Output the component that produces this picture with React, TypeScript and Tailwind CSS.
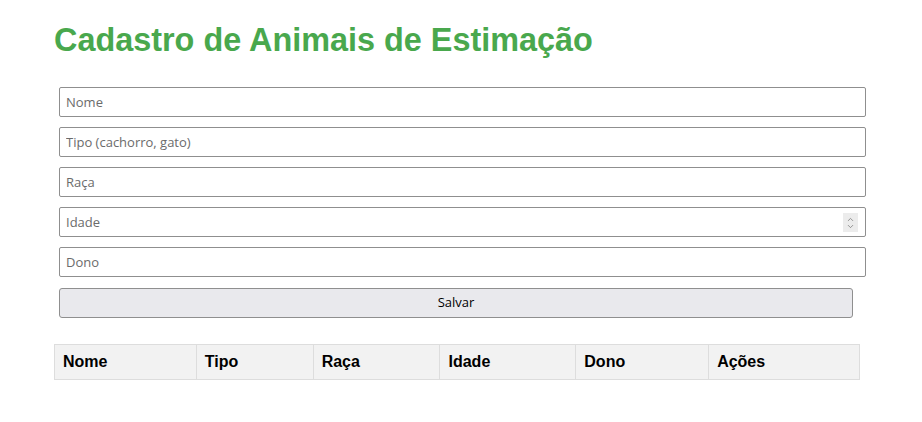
import { ChevronUp, ChevronDown } from "lucide-react";

const fields = ["Nome", "Tipo (cachorro, gato)", "Raça"];
const columns = [
  { label: "Nome", w: "w-[142px]" },
  { label: "Tipo", w: "w-[117px]" },
  { label: "Raça", w: "w-[127px]" },
  { label: "Idade", w: "w-[136px]" },
  { label: "Dono", w: "w-[133px]" },
  { label: "Ações", w: "w-[151px]" },
];

function Field({ placeholder }: { placeholder: string }) {
  return (
    <input
      placeholder={placeholder}
      className="h-[30px] w-full rounded-[2px] border border-[#8f8f8f] bg-white px-[6px] text-[13px] text-[#333] placeholder:text-[#6b6b6b] outline-none"
      style={{ fontFamily: '"Open Sans", "Noto Sans", sans-serif' }}
    />
  );
}

export default function App() {
  return (
    <div className="min-h-[422px] w-full bg-white pl-[54px] pt-[22px]" style={{ fontFamily: '"Liberation Sans", Arial, sans-serif' }}>
      <h1 className="text-[32.4px] font-bold leading-[37px] text-[#49a84d]">Cadastro de Animais de Estimação</h1>
      <div className="mt-[28px] flex w-[812px] flex-col gap-[10px] pl-[5px]">
        {fields.map((f) => (
          <Field key={f} placeholder={f} />
        ))}
        <div className="relative">
          <Field placeholder="Idade" />
          <span className="absolute right-[8px] top-[6px] flex h-[19px] w-[15px] flex-col items-center justify-center bg-[#ececec] text-[#777]">
            <ChevronUp size={9} strokeWidth={2} className="-mb-[1px]" />
            <ChevronDown size={9} strokeWidth={2} className="-mt-[1px]" />
          </span>
        </div>
        <Field placeholder="Dono" />
        <button
          className="mt-[1px] h-[30px] w-[794px] rounded-[3px] border border-[#8f8f8f] bg-[#e9e9ed] text-[13px] text-black"
          style={{ fontFamily: '"Open Sans", "Noto Sans", sans-serif' }}
        >
          Salvar
        </button>
      </div>
      <table className="mt-[26px] w-[806px] border-collapse">
        <thead>
          <tr className="bg-[#f2f2f2]">
            {columns.map((c) => (
              <th key={c.label} className={`${c.w} h-[35px] border border-[#dddddd] px-[8px] text-left text-[16px] font-bold text-black`}>
                {c.label}
              </th>
            ))}
          </tr>
        </thead>
      </table>
    </div>
  );
}
